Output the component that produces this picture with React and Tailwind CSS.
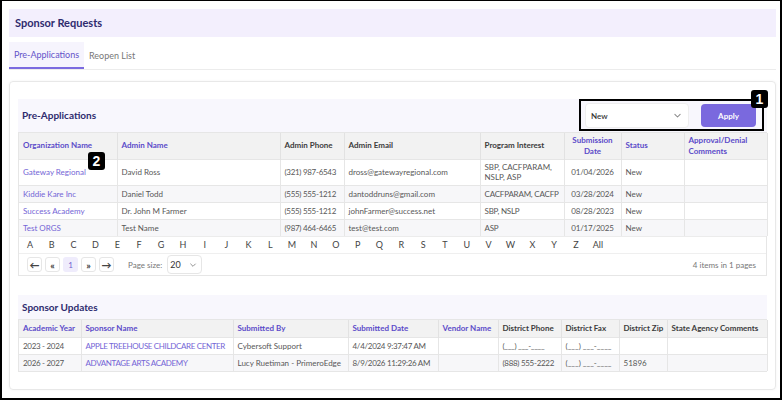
import React from 'react';

const F = { fontFamily: 'Lato, "Noto Sans", sans-serif' };

const Chevron = ({ cls = 'w-[9px] h-[9px]' }) => (
  <svg viewBox="0 0 12 12" className={cls} fill="none" stroke="#8a8a8a" strokeWidth="1.4" strokeLinecap="round" strokeLinejoin="round">
    <path d="M2.5 4.5 L6 8 L9.5 4.5" />
  </svg>
);

const Badge = ({ n, className }) => (
  <div className={'absolute bg-black text-white rounded-[3px] flex items-center justify-center text-[14px] font-bold leading-none ' + className} style={{ fontFamily: 'Arial, "Liberation Sans", sans-serif' }}>
    {n}
  </div>
);

const P = 'text-[#5b4bc9]';
const D = 'text-[#3c3c3c]';

const cols1 = [
  { t: 'Organization Name', w: 'w-[98px]', c: P },
  { t: 'Admin Name', w: 'w-[163px]', c: P },
  { t: 'Admin Phone', w: 'w-[64px]', c: D },
  { t: 'Admin Email', w: 'w-[136px]', c: D },
  { t: 'Program Interest', w: 'w-[84px]', c: D },
  { t: 'Submission Date', w: 'w-[57px]', c: P, center: true },
  { t: 'Status', w: 'w-[63px]', c: P },
  { t: 'Approval/Denial Comments', w: 'w-[83px]', c: P },
];

const rows1 = [
  ['Gateway Regional', 'David Ross', '(321) 987-6543', 'dross@gatewayregional.com', 'SBP, CACFPARAM, NSLP, ASP', '01/04/2026', 'New', ''],
  ['Kiddie Kare Inc', 'Daniel Todd', '(555) 555-1212', 'dantoddruns@gmail.com', 'CACFPARAM, CACFP', '03/28/2024', 'New', ''],
  ['Success Academy', 'Dr. John M Farmer', '(555) 555-1212', 'johnFarmer@success.net', 'SBP, NSLP', '08/28/2023', 'New', ''],
  ['Test ORGS', 'Test Name', '(987) 464-6465', 'test@test.com', 'ASP', '01/17/2025', 'New', ''],
];

const cols2 = [
  { t: 'Academic Year', w: 'w-[62px]', c: P },
  { t: 'Sponsor Name', w: 'w-[152px]', c: P },
  { t: 'Submitted By', w: 'w-[115px]', c: P },
  { t: 'Submitted Date', w: 'w-[90px]', c: P },
  { t: 'Vendor Name', w: 'w-[60px]', c: P },
  { t: 'District Phone', w: 'w-[63px]', c: D },
  { t: 'District Fax', w: 'w-[58px]', c: D },
  { t: 'District Zip', w: 'w-[48px]', c: D },
  { t: 'State Agency Comments', w: 'w-[100px]', c: D },
];

const rows2 = [
  ['2023 - 2024', 'APPLE TREEHOUSE CHILDCARE CENTER', 'Cybersoft Support', '4/4/2024 9:37:47 AM', '', '(___) ___-____', '(___) ___-____', '', ''],
  ['2026 - 2027', 'ADVANTAGE ARTS ACADEMY', 'Lucy Ruetiman - PrimeroEdge', '8/9/2026 11:29:26 AM', '', '(888) 555-2222', '(___) ___-____', '51896', ''],
];

const letters = 'ABCDEFGHIJKLMNOPQRSTUVWXYZ'.split('').concat(['All']);

const PagerBtn = ({ children, active }) => (
  <div className={'w-[15px] h-[15px] rounded-[3px] flex items-center justify-center leading-none ' + (active ? 'bg-[#efecfc] text-[#6f5fd0] text-[8px]' : 'border border-[#e6e6e6] text-[#444] text-[10px] font-bold')}>
    {children}
  </div>
);

export default function App() {
  return (
    <div className="w-[782px] h-[400px] bg-white border-l-2 border-t border-r-2 border-b-2 border-black pl-[7px] pr-[4px] pt-[8px] overflow-hidden" style={F}>
      <div className="h-[28px] bg-[#f3effd] flex items-center pl-[6px] text-[11px] font-bold text-[#2e2b6e]">
        Sponsor Requests
      </div>
      <div className="mt-[5px] h-[28px] flex items-stretch border-b border-[#ececec]">
        <div className="w-[75px] bg-[#f6f4fd] border-b-2 border-[#7b6ae0] flex items-center justify-center text-[9px] text-[#6453c9]">Pre-Applications</div>
        <div className="px-[5px] flex items-center text-[9px] text-[#777]">Reopen List</div>
      </div>

      <div className="mt-[11px] h-[309px] border border-[#e8e8e8] rounded-[4px] shadow-[0_0_3px_rgba(0,0,0,0.05)] pl-[8px] pr-[8px] pt-[17px]">
        <div className="relative h-[33px] bg-[#f8f7fd] flex items-center justify-between pl-[4px]">
          <div className="text-[10px] font-bold text-[#2e2b6e]">Pre-Applications</div>
          <div className="flex items-center gap-[12px] mr-[11px]">
            <div className="w-[104px] h-[25px] border border-[#eeeeee] rounded-[4px] bg-white flex items-center justify-between pl-[5px] pr-[6px] text-[8px] text-[#333] font-semibold">
              New
              <Chevron />
            </div>
            <div className="w-[55px] h-[23px] rounded-[4px] bg-[#7a69de] text-white text-[8px] font-bold flex items-center justify-center">Apply</div>
          </div>
          <div className="absolute left-[561px] top-[0px] w-[185px] h-[32px] border-2 border-black pointer-events-none" />
          <Badge n="1" className="left-[733px] top-[-9px] w-[17px] h-[18px]" />
        </div>

        <div className="relative border border-[#e6e6e6]">
          <table className="table-fixed border-collapse w-full text-[8px]">
            <thead>
              <tr className="bg-[#f2f2f2] h-[26px]">
                {cols1.map((c, i) => (
                  <th key={i} className={c.w + ' ' + c.c + ' font-bold px-[4px] leading-[11px] border-r border-[#e2e2e2] ' + (c.center ? 'text-center' : 'text-left')}>{c.t}</th>
                ))}
              </tr>
            </thead>
            <tbody>
              {rows1.map((r, ri) => (
                <tr key={ri} className={(ri === 0 ? 'h-[26px] ' : 'h-[17px] ') + (ri % 2 === 1 ? 'bg-[#f7f7f9]' : 'bg-white') + ' border-t border-[#e6e6e6]'}>
                  {r.map((v, ci) => (
                    <td key={ci} className={'px-[4px] leading-[10px] border-r border-[#e6e6e6] ' + (ci === 0 ? 'text-[#7465d6]' : 'text-[#585858]') + (ci === 5 ? ' text-center tracking-[-0.2px] whitespace-nowrap' : '') + (ci === 2 ? ' whitespace-nowrap tracking-[-0.3px]' : '') + (ci === 4 && ri > 0 ? ' whitespace-nowrap tracking-[-0.2px]' : '')}>{v}</td>
                  ))}
                </tr>
              ))}
            </tbody>
          </table>
          <div className="h-[17px] flex items-center border-t border-[#ececec] text-[9px] text-[#444]">
            {letters.map((l) => (
              <div key={l} className="w-[21.85px] text-center">{l}</div>
            ))}
          </div>
          <div className="h-[22px] flex items-center justify-between pl-[8px] pr-[10px] border-t border-[#efefef]">
            <div className="flex items-center gap-[3px]">
              <PagerBtn>←</PagerBtn>
              <PagerBtn>«</PagerBtn>
              <PagerBtn active>1</PagerBtn>
              <PagerBtn>»</PagerBtn>
              <PagerBtn>→</PagerBtn>
              <div className="ml-[11px] text-[8px] text-[#777]">Page size:</div>
              <div className="ml-[2px] w-[35px] h-[19px] border border-[#e6e6e6] rounded-[4px] flex items-center justify-between pl-[2px] pr-[4px] text-[9px] text-[#333]">
                20
                <Chevron cls="w-[8px] h-[8px]" />
              </div>
            </div>
            <div className="text-[8px] text-[#777]">4 items in 1 pages</div>
          </div>
          <Badge n="2" className="left-[69px] top-[19px] w-[17px] h-[18px]" />
        </div>

        <div className="mt-[19px] h-[24px] bg-[#f8f7fd] flex items-center pl-[4px] text-[10px] font-bold text-[#2e2b6e]">Sponsor Updates</div>
        <div className="border border-[#e6e6e6]">
          <table className="table-fixed border-collapse w-full text-[8px]">
            <thead>
              <tr className="bg-[#f2f2f2] h-[17px]">
                {cols2.map((c, i) => (
                  <th key={i} className={c.w + ' ' + c.c + ' font-bold px-[4px] text-left border-r border-[#e2e2e2] whitespace-nowrap overflow-hidden'}>{c.t}</th>
                ))}
              </tr>
            </thead>
            <tbody>
              {rows2.map((r, ri) => (
                <tr key={ri} className={'h-[17px] border-t border-[#e6e6e6] ' + (ri % 2 === 1 ? 'bg-[#f7f7f9]' : 'bg-white')}>
                  {r.map((v, ci) => (
                    <td key={ci} className={'px-[4px] whitespace-nowrap overflow-hidden border-r border-[#e6e6e6] ' + (ci === 1 ? 'text-[#7465d6] tracking-[-0.35px]' : 'text-[#585858]') + (ci === 3 || ci === 5 || ci === 0 ? ' tracking-[-0.3px]' : '')}>{v}</td>
                  ))}
                </tr>
              ))}
            </tbody>
          </table>
        </div>
      </div>
    </div>
  );
}
